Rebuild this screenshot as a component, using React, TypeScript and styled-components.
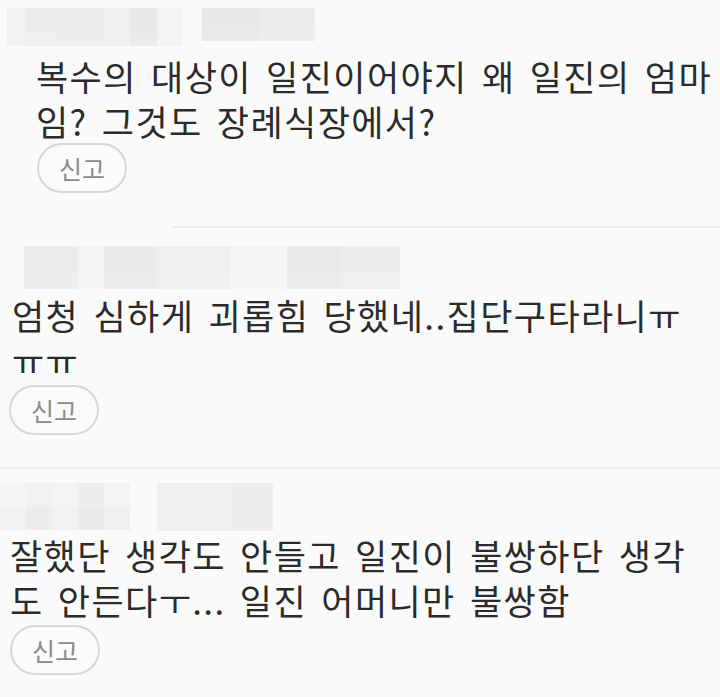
import React from "react";
import styled, { createGlobalStyle } from "styled-components";

const Global = createGlobalStyle`
  html, body { margin: 0; padding: 0; background: #fafafa; }
  body { font-family: "Noto Sans CJK KR", "Noto Sans", sans-serif; }
`;

const Page = styled.main`
  display: flex;
  flex-direction: column;
  width: 720px;
  overflow: hidden;
`;

const Comment = styled.section<{ $top: number; $bottom: number }>`
  display: flex;
  flex-direction: column;
  align-items: flex-start;
  padding: ${(p) => p.$top}px 0 ${(p) => p.$bottom}px 0;
`;

const MosaicRow = styled.div<{ $left: number }>`
  display: flex;
  align-items: flex-start;
  margin-left: ${(p) => p.$left}px;
`;

const Block = styled.div<{ $gapBefore: number; $h: number }>`
  display: flex;
  margin-left: ${(p) => p.$gapBefore}px;
  height: ${(p) => p.$h}px;
`;

const Column = styled.div<{ $w: number }>`
  display: flex;
  flex-direction: column;
  width: ${(p) => p.$w}px;
`;

const Cell = styled.div<{ $shade: string; $grow: number }>`
  flex: ${(p) => p.$grow};
  background: ${(p) => p.$shade};
`;

const Text = styled.div<{ $mt: number; $ml: number }>`
  display: flex;
  flex-direction: column;
  margin: ${(p) => p.$mt}px 0 0 ${(p) => p.$ml}px;
`;

const TextLine = styled.span`
  display: block;
  height: 45px;
  font-size: 35px;
  line-height: 45px;
  letter-spacing: 1.4px;
  word-spacing: 5px;
  color: #2b2b2b;
  white-space: nowrap;
`;

const ReportButton = styled.button<{ $mt: number; $ml: number }>`
  margin: ${(p) => p.$mt}px 0 0 ${(p) => p.$ml}px;
  width: 90px;
  height: 50px;
  border: 2px solid #d6d6d6;
  border-radius: 25px;
  background: #fbfbfb;
  color: #8a8a8a;
  font-family: "Noto Sans CJK KR", "Noto Sans", sans-serif;
  font-size: 25px;
  padding: 0;
  display: flex;
  align-items: center;
  justify-content: center;
`;

const Divider = styled.hr<{ $left: number }>`
  margin: 0 0 0 ${(p) => p.$left}px;
  border: none;
  height: 2px;
  background: #ededed;
`;

type Col = { w: number; top: string; bottom: string };
type BlockData = { gap: number; h: number; split: number; cols: Col[] };

function Mosaic({ left, blocks }: { left: number; blocks: BlockData[] }) {
  return (
    <MosaicRow $left={left}>
      {blocks.map((b, i) => (
        <Block key={i} $gapBefore={b.gap} $h={b.h}>
          {b.cols.map((c, j) => (
            <Column key={j} $w={c.w}>
              <Cell $shade={c.top} $grow={b.split} />
              <Cell $shade={c.bottom} $grow={1 - b.split} />
            </Column>
          ))}
        </Block>
      ))}
    </MosaicRow>
  );
}

const names1: BlockData[] = [
  {
    gap: 0,
    h: 38,
    split: 0.65,
    cols: [
      { w: 18, top: "#f2f2f2", bottom: "#f1f1f1" },
      { w: 27, top: "#ececec", bottom: "#efefef" },
      { w: 53, top: "#ededed", bottom: "#eeeeee" },
      { w: 25, top: "#efefef", bottom: "#f0f0f0" },
      { w: 27, top: "#e9e9e9", bottom: "#ebebeb" },
      { w: 26, top: "#f4f4f4", bottom: "#f3f3f3" },
    ],
  },
  {
    gap: 19,
    h: 33,
    split: 0.6,
    cols: [
      { w: 56, top: "#e9e9e9", bottom: "#eaeaea" },
      { w: 57, top: "#ececec", bottom: "#ededed" },
    ],
  },
];

const names2: BlockData[] = [
  {
    gap: 0,
    h: 43,
    split: 0.62,
    cols: [
      { w: 54, top: "#ececec", bottom: "#eeeeee" },
      { w: 26, top: "#f4f4f4", bottom: "#f5f5f5" },
      { w: 53, top: "#ebebeb", bottom: "#ededed" },
      { w: 73, top: "#efefef", bottom: "#f0f0f0" },
      { w: 57, top: "#f5f5f5", bottom: "#f5f5f5" },
      { w: 55, top: "#ebebeb", bottom: "#ececec" },
      { w: 58, top: "#eeeeee", bottom: "#efefef" },
    ],
  },
];

const names3: BlockData[] = [
  {
    gap: 0,
    h: 47,
    split: 0.5,
    cols: [
      { w: 26, top: "#f4f4f4", bottom: "#f1f1f1" },
      { w: 26, top: "#f1f1f1", bottom: "#ececec" },
      { w: 26, top: "#f3f3f3", bottom: "#f1f1f1" },
      { w: 26, top: "#eeeeee", bottom: "#ebebeb" },
      { w: 26, top: "#f3f3f3", bottom: "#efefef" },
    ],
  },
  {
    gap: 27,
    h: 48,
    split: 0.5,
    cols: [
      { w: 73, top: "#efefef", bottom: "#efefef" },
      { w: 43, top: "#eeeeee", bottom: "#eeeeee" },
    ],
  },
];

export default function App() {
  return (
    <>
      <Global />
      <Page>
        <Comment $top={8} $bottom={33}>
          <Mosaic left={7} blocks={names1} />
          <Text $mt={7} $ml={36}>
            <TextLine>복수의 대상이 일진이어야지 왜 일진의 엄마</TextLine>
            <TextLine>임? 그것도 장례식장에서?</TextLine>
          </Text>
          <ReportButton $mt={0} $ml={37}>신고</ReportButton>
        </Comment>
        <Divider $left={172} />
        <Comment $top={18} $bottom={32}>
          <Mosaic left={24} blocks={names2} />
          <Text $mt={3} $ml={12}>
            <TextLine>엄청 심하게 괴롭힘 당했네..집단구타라니ㅠ</TextLine>
            <TextLine>ㅠㅠ</TextLine>
          </Text>
          <ReportButton $mt={3} $ml={9}>신고</ReportButton>
        </Comment>
        <Divider $left={0} />
        <Comment $top={14} $bottom={20}>
          <Mosaic left={0} blocks={names3} />
          <Text $mt={1} $ml={10}>
            <TextLine>잘했단 생각도 안들고 일진이 불쌍하단 생각</TextLine>
            <TextLine>도 안든다ㅜ... 일진 어머니만 불쌍함</TextLine>
          </Text>
          <ReportButton $mt={3} $ml={10}>신고</ReportButton>
        </Comment>
      </Page>
    </>
  );
}
